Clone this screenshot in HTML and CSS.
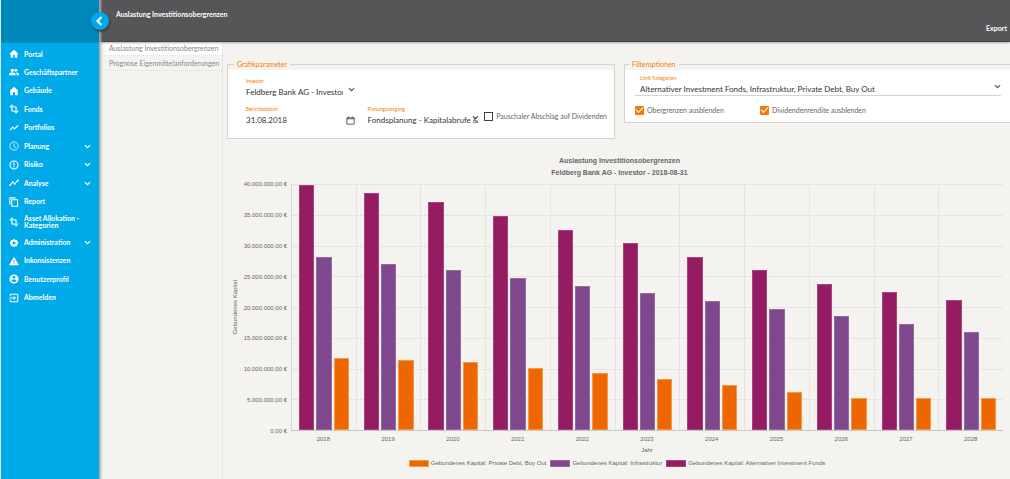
FILE: index.html
```html
<!DOCTYPE html>
<html lang="de">
<head>
<meta charset="utf-8">
<title>Auslastung Investitionsobergrenzen</title>
<link rel="stylesheet" href="styles.css">
</head>
<body>
<svg class="defs" aria-hidden="true">
  <symbol id="chev" viewBox="0 0 12 8"><path d="M1.500 1.500 6 6l4.500-4.500" fill="none" stroke="currentColor" stroke-width="2"/></symbol>
  <symbol id="crop" viewBox="0 0 24 24"><path d="M22 18v-2H8V4h2L7 1 4 4h2v2H2v2h4v8c0 1.100.9 2 2 2h8v2h-2l3 3 3-3h-2v-2h4zM10 8h6v6h2V8c0-1.100-.9-2-2-2h-6v2z" stroke="currentColor" stroke-width=".8"/></symbol>
  <symbol id="line" viewBox="0 0 24 24"><path d="m2 17 7-7 4 4 8.500-8" fill="none" stroke="currentColor" stroke-width="2.800"/></symbol>
</svg>
<div class="app">
  <aside class="side">
    <div class="brand"><button class="collapse" type="button" aria-label="Menü einklappen"><svg viewBox="0 0 12 12"><path d="M7.500 2 3.500 6l4 4" fill="none" stroke="currentColor" stroke-width="2"/></svg></button></div>
    <nav class="menu">
      <a href="#"><svg viewBox="0 0 24 24"><path d="M10 21v-7h4v7h6v-9h3L12 2 1 12h3v9z"/></svg><span>Portal</span></a>
      <a href="#"><svg viewBox="0 0 24 24"><circle cx="8" cy="8" r="4"/><circle cx="16.500" cy="8" r="3.500"/><path d="M0 20v-3c0-3 4-4 8-4s8 1 8 4v3zM18 20v-3c0-1.500-.6-2.800-1.500-3.800 4 0 7.500 1.300 7.500 3.800v3z"/></svg><span>Geschäftspartner</span></a>
      <a href="#"><svg viewBox="0 0 24 24"><path d="M9.500 22v-7h5v7H21V10l-9-8-9 8v12z"/></svg><span>Gebäude</span></a>
      <a href="#"><svg><use href="#crop"/></svg><span>Fonds</span></a>
      <a href="#"><svg><use href="#line"/></svg><span>Portfolios</span></a>
      <a href="#"><svg viewBox="0 0 24 24"><circle cx="12" cy="12" r="10" fill="none" stroke="currentColor" stroke-width="1.800"/><path d="M12 5v8l5 3" fill="none" stroke="currentColor" stroke-width="1.800"/></svg><span>Planung</span><svg class="chev"><use href="#chev"/></svg></a>
      <a href="#"><svg viewBox="0 0 24 24"><circle cx="12" cy="12" r="9.500" fill="none" stroke="currentColor" stroke-width="2.600"/><path d="M10.600 6h2.800v7.500h-2.800zM10.600 15.500h2.800V18h-2.800z"/></svg><span>Risiko</span><svg class="chev"><use href="#chev"/></svg></a>
      <a href="#"><svg viewBox="0 0 24 24"><path d="m2 17 7-7 4 4 8.500-8" fill="none" stroke="currentColor" stroke-width="2.600"/><circle cx="2.500" cy="17" r="2.200"/><circle cx="9" cy="10" r="2.200"/><circle cx="14" cy="14" r="2.200"/><circle cx="21.500" cy="6" r="2.200"/></svg><span>Analyse</span><svg class="chev"><use href="#chev"/></svg></a>
      <a href="#"><svg viewBox="0 0 24 24"><path d="M2 18V2h14M6.500 6.500h14v15.500h-14z" fill="none" stroke="currentColor" stroke-width="2.600"/></svg><span>Report</span></a>
      <a class="tall" href="#"><svg><use href="#crop"/></svg><span>Asset Allokation - Kategorien</span></a>
      <a href="#"><svg viewBox="0 0 24 24"><path fill-rule="evenodd" d="M12 2l3 2.500 4-.5 1 4 2.500 4-2.500 4-1 4-4-.5-3 2.500-3-2.500-4 .5-1-4L1.500 12 4 8l1-4 4 .5zM12 8.500a3.500 3.500 0 1 0 0 7 3.500 3.500 0 0 0 0-7z"/></svg><span>Administration</span><svg class="chev"><use href="#chev"/></svg></a>
      <a href="#"><svg viewBox="0 0 24 24"><path fill-rule="evenodd" d="M0 22 12 2l12 20zM11 9v6h2V9zM11 17v2h2v-2z"/></svg><span>Inkonsistenzen</span></a>
      <a href="#"><svg viewBox="0 0 24 24"><path fill-rule="evenodd" d="M12 1a11 11 0 1 0 0 22 11 11 0 0 0 0-22zM12 4.500a3.500 3.500 0 1 1 0 7 3.500 3.500 0 0 1 0-7zM5.500 16c0-2.200 4.300-3 6.500-3s6.500.8 6.500 3a8 8 0 0 1-13 0z"/></svg><span>Benutzerprofil</span></a>
      <a href="#"><svg viewBox="0 0 24 24"><path d="M3 8V3h18v18H3v-5M1 12h14M11 7.500l4.500 4.500-4.500 4.500" fill="none" stroke="currentColor" stroke-width="2.400"/></svg><span>Abmelden</span></a>
    </nav>
  </aside>
  <div class="page">
    <header class="top">
      <h1>Auslastung Investitionsobergrenzen</h1>
      <button class="export" type="button">Export</button>
    </header>
    <div class="body">
      <nav class="sub">
        <a class="active" href="#">Auslastung Investitionsobergrenzen</a>
        <a href="#">Prognose Eigenmittelanforderungen</a>
      </nav>
      <main class="main">
        <form class="panels">
          <fieldset class="panel params">
            <legend>Grafikparameter</legend>
            <div class="field first">
              <label for="investor">Investor</label>
              <div class="control"><select id="investor"><option>Feldberg Bank AG - Investor</option></select><svg class="chev"><use href="#chev"/></svg></div>
            </div>
            <div class="field second">
              <label for="datum">Berichtsdatum</label>
              <div class="control"><input id="datum" type="text" value="31.08.2018"><button class="cal" type="button" aria-label="Kalender"><svg viewBox="0 0 16 16"><path d="M1.500 3h13v11.500h-13zM1.500 5h13M4.500 1v2M11.500 1v2" fill="none" stroke="currentColor" stroke-width="1.500"/></svg></button></div>
            </div>
            <div class="field second plan">
              <label for="vorgang">Planungsvorgang</label>
              <div class="control"><select id="vorgang"><option>Fondsplanung - Kapitalabrufe &amp; Ausschüttungen</option></select><svg class="chev"><use href="#chev"/></svg></div>
            </div>
            <label class="check second"><input type="checkbox"><span>Pauschaler Abschlag auf Dividenden</span></label>
          </fieldset>
          <fieldset class="panel filter">
            <legend>Filteroptionen</legend>
            <div class="field wide">
              <label for="limit">Limit Kategorien</label>
              <div class="control"><select id="limit"><option>Alternativer Investment Fonds, Infrastruktur, Private Debt, Buy Out</option></select><svg class="chev"><use href="#chev"/></svg></div>
            </div>
            <div class="checks">
              <label class="check"><input type="checkbox" checked><span>Obergrenzen ausblenden</span></label>
              <label class="check"><input type="checkbox" checked><span>Dividendenrendite ausblenden</span></label>
            </div>
          </fieldset>
        </form>
        <section class="chart">
          <h2>Auslastung Investitionsobergrenzen<br>Feldberg Bank AG - Investor - 2018-08-31</h2>
          <div class="graph">
            <div class="ytitle"><span>Gebundenes Kapital</span></div>
            <div class="yaxis">
              <span>40.000.000,00 €</span><span>35.000.000,00 €</span><span>30.000.000,00 €</span><span>25.000.000,00 €</span><span>20.000.000,00 €</span><span>15.000.000,00 €</span><span>10.000.000,00 €</span><span>5.000.000,00 €</span><span>0,00 €</span>
            </div>
            <div class="plot">
              <div class="rows"><i></i><i></i><i></i><i></i><i></i><i></i><i></i><i></i></div>
              <div class="group"><b class="alt" style="height:99.5%"></b><b class="inf" style="height:70.2%"></b><b class="debt" style="height:29.4%"></b></div>
              <div class="group"><b class="alt" style="height:96.2%"></b><b class="inf" style="height:67.6%"></b><b class="debt" style="height:28.6%"></b></div>
              <div class="group"><b class="alt" style="height:92.6%"></b><b class="inf" style="height:65%"></b><b class="debt" style="height:27.8%"></b></div>
              <div class="group"><b class="alt" style="height:87%"></b><b class="inf" style="height:61.8%"></b><b class="debt" style="height:25.3%"></b></div>
              <div class="group"><b class="alt" style="height:81.5%"></b><b class="inf" style="height:58.6%"></b><b class="debt" style="height:23.1%"></b></div>
              <div class="group"><b class="alt" style="height:76%"></b><b class="inf" style="height:55.6%"></b><b class="debt" style="height:20.6%"></b></div>
              <div class="group"><b class="alt" style="height:70.5%"></b><b class="inf" style="height:52.4%"></b><b class="debt" style="height:18.1%"></b></div>
              <div class="group"><b class="alt" style="height:64.9%"></b><b class="inf" style="height:49.3%"></b><b class="debt" style="height:15.6%"></b></div>
              <div class="group"><b class="alt" style="height:59.2%"></b><b class="inf" style="height:46.2%"></b><b class="debt" style="height:13.1%"></b></div>
              <div class="group"><b class="alt" style="height:56.1%"></b><b class="inf" style="height:43.1%"></b><b class="debt" style="height:13.1%"></b></div>
              <div class="group"><b class="alt" style="height:53%"></b><b class="inf" style="height:39.9%"></b><b class="debt" style="height:13.1%"></b></div>
            </div>
            <div class="xaxis"><span>2018</span><span>2019</span><span>2020</span><span>2021</span><span>2022</span><span>2023</span><span>2024</span><span>2025</span><span>2026</span><span>2027</span><span>2028</span></div>
            <div class="xtitle">Jahr</div>
          </div>
          <ul class="legend">
            <li><b class="debt"></b>Gebundenes Kapital: Private Debt, Buy Out</li>
            <li><b class="inf"></b>Gebundenes Kapital: Infrastruktur</li>
            <li><b class="alt"></b>Gebundenes Kapital: Alternativer Investment Fonds</li>
          </ul>
        </section>
      </main>
    </div>
  </div>
</div>
</body>
</html>
```
FILE: styles.css
```css
* { box-sizing: border-box; }
body { margin: 0; background: #f5f3f0; font: 7px/10px Lato, "Open Sans", sans-serif; color: #333; }
a { color: inherit; text-decoration: none; }
button, input, select { margin: 0; padding: 0; border: 0; background: none; font: inherit; color: inherit; }
svg { display: block; fill: currentColor; }
.defs { position: absolute; width: 0; height: 0; }
.app { display: flex; min-height: 100vh; }

.side { flex: none; width: 99px; background: #00a9e8; border-left: 1px solid #d5eef8; color: #fff; box-shadow: 1px 0 2px 1px #aaa; z-index: 2; }
.brand { position: relative; height: 43px; background: #0087b9; border-bottom: 1px dotted #0a9fd6; }
.collapse { position: absolute; right: -10px; top: 12px; display: grid; place-items: center; width: 18px; height: 18px; border-radius: 50%; background: #00a9e8; box-shadow: 1px 2px 2px #3c3c40; }
.collapse svg { width: 12px; height: 12px; }
.menu { display: flex; flex-direction: column; justify-content: space-between; min-height: 264px; padding: 2px 8px 0; font-weight: 700; line-height: 7px; }
.menu a { display: flex; align-items: center; gap: 5px; min-height: 18px; }
.menu .tall { min-height: 22px; }
.menu svg { flex: none; width: 10px; height: 10px; }
.menu span { flex: 1; }
.menu .chev { width: 7px; height: 5px; stroke-width: 3px; }

.page { flex: 1; min-width: 0; display: flex; flex-direction: column; }
.top { display: flex; justify-content: space-between; align-items: flex-start; height: 42px; padding: 9px 3px 0 17px; background: #565658; border-bottom: 1px solid #444; box-shadow: 0 1px 2px #aaa; color: #fff; z-index: 1; }
.top h1 { margin: 0; font-size: 7px; line-height: 10px; font-weight: 700; }
.export { margin-top: 14px; font-weight: 700; }
.body { flex: 1; display: flex; }
.sub { flex: none; width: 124px; padding-left: 6px; border-right: 1px solid #e6e4e2; color: #888; }
.sub a { display: block; height: 15px; padding: 2px 0 0 4px; border-bottom: 1px dotted #ddd; white-space: nowrap; }
.sub .active { height: 14px; padding-top: 1px; background: #fff; }
.main { flex: 1; min-width: 0; display: flex; flex-direction: column; padding: 17px 0 12px 4px; }

.panels { display: grid; grid-template-columns: 388fr 386fr; gap: 9px; align-items: start; }
.panel { min-width: 0; margin: 0; padding: 0 7px 8px 18px; border: 1px solid #d6d3d0; background: linear-gradient(#f5f3f0 5px, #fff 5px); }
.panel legend { margin-left: -12px; padding: 0 3px; color: #f57c00; }
.params { display: grid; grid-template-columns: 117fr 112fr 122fr; column-gap: 5px; padding-bottom: 12px; }
.params .first { margin-top: 7px; }
.params .second { grid-row: 2; margin-top: 6px; }
.field label { display: block; color: #f57c00; font-size: 5px; line-height: 10px; }
.control { display: flex; align-items: center; gap: 5px; height: 12px; font-size: 8px; }
.params .control { margin-right: 8px; }
.control select, .control input { flex: 1; min-width: 0; width: 0; height: 12px; appearance: none; line-height: 12px; }
.control .chev { flex: none; width: 7px; height: 5px; margin-bottom: 6px; color: #555; }
.params .plan .control { gap: 0; margin-right: 0; }
.plan .chev { margin-left: -8px; }
.cal svg { width: 9px; height: 9px; color: #444; }
.check { display: flex; align-items: center; gap: 3px; color: #666; white-space: nowrap; }
.params .check { padding-top: 2px; }
.check input { flex: none; appearance: none; width: 9px; height: 9px; border: 1px solid #444; background: #fff; }
.check input:checked { border: 0; border-radius: 1px; background: #f57c00; display: grid; place-items: center; }
.check input:checked::before { content: ""; width: 6px; height: 3px; margin-bottom: 2px; border: solid #fff; border-width: 0 0 1px 1px; transform: rotate(-45deg); }
.filter { border-right: 0; padding: 0 9px 7px 10px; }
.filter legend { margin-left: -6px; }
.wide { margin-top: 4px; border-bottom: 1px solid #d6d3d0; }
.wide label, .wide .control { padding-left: 5px; }
.checks { display: grid; grid-template-columns: 125fr 241fr; margin-top: 9px; }

.chart { flex: 1; display: flex; flex-direction: column; padding: 16px 7px 0 0; color: #666; font: 6px/8px "Liberation Sans", Arial, sans-serif; }
.chart h2 { margin: 0 0 0 9px; text-align: center; font-size: 7px; line-height: 12px; font-weight: 700; }
.graph { flex: 1; display: grid; grid-template-columns: 16px 44px 1fr; grid-template-rows: 1fr 12px 11px; margin-top: 5px; }
.ytitle { display: grid; place-items: center; }
.ytitle span { writing-mode: vertical-rl; transform: rotate(180deg); }
.yaxis { display: flex; flex-direction: column; justify-content: space-between; margin: -4px 0; text-align: right; white-space: nowrap; }
.plot { position: relative; display: flex; margin-left: 4px; border-left: 1px solid #d8d6d4; border-bottom: 1px solid #c8c6c4; }
.rows { position: absolute; inset: 0; display: flex; flex-direction: column; }
.rows i { flex: 1; border-top: 1px solid #e6e4e1; }
.group { position: relative; flex: 1; display: flex; justify-content: center; align-items: flex-end; gap: 2px; border-right: 1px solid #e6e4e1; }
.group:last-child { border-right: 0; }
.group b { flex: 0 0 24%; }
.alt { background: #951b63; border: 1px solid #a8417c; }
.inf { background: #7f488d; border: 1px solid #946aa0; }
.debt { background: #ee6600; border: 1px solid #f39a45; }
.xaxis { grid-column: 3; display: flex; margin-left: 4px; padding-top: 4px; text-align: center; }
.xaxis span { flex: 1; }
.xtitle { grid-column: 3; margin-left: 4px; padding-top: 3px; text-align: center; }
.legend { display: flex; justify-content: center; gap: 4px; margin: 5px 0 0 4px; padding: 0; list-style: none; }
.legend li { display: flex; align-items: center; gap: 2px; }
.legend b { width: 20px; height: 7px; }
```
